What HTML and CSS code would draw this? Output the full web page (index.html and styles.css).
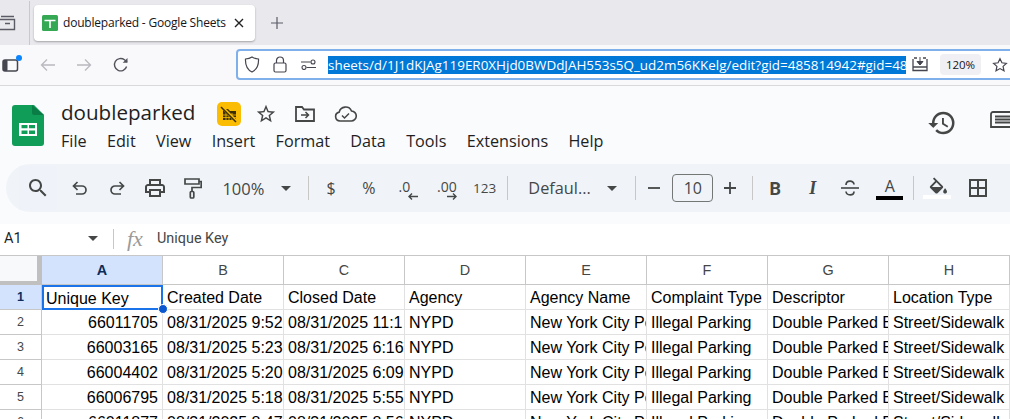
FILE: index.html
```html
<!DOCTYPE html>
<html lang="en">
<head>
<meta charset="UTF-8">
<title>doubleparked - Google Sheets</title>
<link rel="stylesheet" href="styles.css">
</head>
<body>

<!-- browser tabs -->
<div class="tabbar">
  <svg class="tabs-icon" width="16" height="16" viewBox="0 0 16 16"><path d="M1 1.5h13M-1 4.5h15.5v10H-1zM5 8.5h5" fill="none" stroke="#5b5b66" stroke-width="1.4"/></svg>
  <div class="tab-sep"></div>
  <div class="tab">
    <svg class="favicon" width="16" height="16" viewBox="0 0 16 16"><rect width="16" height="16" rx="1.5" fill="#34a853"/><path d="M2.5 5.5h11M8 5.5V13" stroke="#fff" stroke-width="1.6"/></svg>
    <span class="tab-title">doubleparked - Google Sheets</span>
    <svg class="tab-close" width="10" height="10" viewBox="0 0 10 10"><path d="M1 1l8 8M9 1l-8 8" stroke="#222" stroke-width="1.4"/></svg>
  </div>
  <svg class="tab-new" width="14" height="14" viewBox="0 0 14 14"><path d="M7 1v12M1 7h12" stroke="#5b5b66" stroke-width="1.2"/></svg>
</div>

<!-- browser toolbar -->
<div class="navbar">
  <div class="sidebar-btn">
    <svg width="17" height="14" viewBox="0 0 17 14"><rect x="1" y="2" width="14.5" height="11" rx="2" fill="none" stroke="#45454f" stroke-width="1.5"/><rect x="1" y="2" width="4.5" height="11" rx="1" fill="#45454f"/></svg>
    <span class="dot"></span>
  </div>
  <svg class="nav-icon" width="16" height="14" viewBox="0 0 16 14"><path d="M15 7H1.5M7 1.5L1.5 7 7 12.5" fill="none" stroke="#b9b9bf" stroke-width="1.3"/></svg>
  <svg class="nav-icon" width="16" height="14" viewBox="0 0 16 14"><path d="M1 7h13.5M9 1.5L14.5 7 9 12.5" fill="none" stroke="#b9b9bf" stroke-width="1.3"/></svg>
  <svg class="nav-icon" width="16" height="16" viewBox="0 0 16 16"><path d="M13.6 9.5A6.2 6.2 0 1 1 11.5 2.8L14 5" fill="none" stroke="#53535c" stroke-width="1.4"/><path d="M14.5 1v4.8H9.7z" fill="#53535c"/></svg>

  <div class="urlbar">
    <svg class="url-icon" width="16" height="17" viewBox="0 0 16 17"><path d="M8 1c2 1.300 4 1.800 6.500 2 .3 6-1.500 10.500-6.500 13C3 13.500 1.200 9 1.500 3 4 2.800 6 2.300 8 1z" fill="none" stroke="#45454f" stroke-width="1.2"/></svg>
    <svg class="url-icon" width="14" height="17" viewBox="0 0 14 17"><rect x="1" y="7" width="12" height="9" rx="1.500" fill="none" stroke="#45454f" stroke-width="1.2"/><path d="M3.500 7V4.500a3.500 3.500 0 0 1 7 0V7" fill="none" stroke="#45454f" stroke-width="1.2"/></svg>
    <svg class="url-icon" width="15" height="11" viewBox="0 0 15 11"><path d="M0 3h9.500M5.500 8.500H15" stroke="#45454f" stroke-width="1.100"/><circle cx="12" cy="3" r="2" fill="#fff" stroke="#45454f" stroke-width="1.100"/><circle cx="3" cy="8.500" r="2" fill="#fff" stroke="#45454f" stroke-width="1.100"/></svg>
    <div class="url-text">sheets/d/1J1dKJAg119ER0XHjd0BWDdJAH553s5Q_ud2m56KKelg/edit?gid=485814942#gid=485814942</div>
    <svg class="url-save" width="16" height="15" viewBox="0 0 16 15"><path d="M2 1h3M11 1h3M1 2v11.500h14V2M1 10h14" fill="none" stroke="#45454f" stroke-width="1.300"/><path d="M8 0v7M5 4.500L8 8l3-3.500z" fill="#45454f" stroke="#45454f"/></svg>
    <span class="zoom-badge">120%</span>
    <svg class="url-star" width="16" height="16" viewBox="0 0 24 24"><path d="M12 2.500l2.900 6.200 6.700.8-5 4.600 1.400 6.700-6-3.400-6 3.400 1.400-6.700-5-4.600 6.700-.8z" fill="none" stroke="#45454f" stroke-width="1.800"/></svg>
  </div>
</div>

<!-- sheets header -->
<div class="app">
  <div class="docbar">
    <svg class="logo" width="32" height="41" viewBox="0 0 32 41"><path d="M3 0h19l10 10v28a3 3 0 0 1-3 3H3a3 3 0 0 1-3-3V3a3 3 0 0 1 3-3z" fill="#0f9d58"/><path d="M20 0l12 10H22a2 2 0 0 1-2-2z" fill="#0a7d46"/><path d="M7 18h18v13H7zM9.500 20v3.300h6V20zm7.500 0v3.300h6V20zM9.500 25.500V29h6v-3.500zm7.500 0V29h6v-3.500z" fill="#fff" fill-rule="evenodd"/></svg>
    <div class="doc-main">
      <div class="doc-title-row">
        <span class="doc-title">doubleparked</span>
        <span class="doc-badge">
          <svg width="20" height="20" viewBox="0 0 20 20"><path d="M4 5h5l2 2h6v9H4z" fill="#3c3000"/><path d="M7 9v7M10 9v7M13 9v7M4 11h13M4 13.500h13" stroke="#fbbc04" stroke-width=".8"/><path d="M2 2l16 16" stroke="#fbbc04" stroke-width="3"/><path d="M2 3l15 15" stroke="#3c3000" stroke-width="1.500"/></svg>
        </span>
        <svg class="doc-icon star" width="22" height="22" viewBox="0 0 24 24"><path fill="#444746" d="M22 9.240l-7.190-.62L12 2 9.190 8.630 2 9.240l5.460 4.730L5.820 21 12 17.270 18.180 21l-1.630-7.030L22 9.240zM12 15.400l-3.760 2.270 1-4.280-3.320-2.880 4.380-.38L12 6.100l1.710 4.040 4.380.38-3.320 2.880 1 4.280L12 15.400z"/></svg>
        <svg class="doc-icon" width="20" height="16" viewBox="0 0 20 16"><path d="M1 15V1h6l2 2.500h10V15z" fill="none" stroke="#444746" stroke-width="1.800"/><path d="M6 9h7M10.500 6l3 3-3 3" fill="none" stroke="#444746" stroke-width="1.500"/></svg>
        <svg class="doc-icon cloud" width="23" height="16" viewBox="0 0 23 16"><path d="M6 15a4.500 4.500 0 0 1-.8-8.900A6.500 6.500 0 0 1 17.500 5a5 5 0 0 1-.5 10z" fill="none" stroke="#444746" stroke-width="1.600"/><path d="M8 9.500l2.500 2.500L15 7.500" fill="none" stroke="#444746" stroke-width="1.500"/></svg>
      </div>
      <div class="menu">
        <span>File</span><span>Edit</span><span>View</span><span>Insert</span><span>Format</span><span>Data</span><span>Tools</span><span>Extensions</span><span>Help</span>
      </div>
    </div>
    <svg class="history" width="30" height="30" viewBox="0 0 24 24"><path fill="#444746" d="M13 3a9 9 0 0 0-9 9H1l3.890 3.890.07.140L9 12H6c0-3.870 3.130-7 7-7s7 3.130 7 7-3.130 7-7 7c-1.930 0-3.680-.790-4.940-2.060l-1.420 1.420A8.954 8.954 0 0 0 13 21a9 9 0 0 0 0-18zm-1 5v5l4.280 2.540.720-1.210-3.500-2.080V8H12z"/></svg>
    <svg class="comments" width="24" height="20" viewBox="0 0 24 20"><path d="M3 1h21v15H1V3a2 2 0 0 1 2-2zM5 5.500h19M5 8.500h19M5 11.500h19" fill="none" stroke="#444746" stroke-width="1.800"/></svg>
  </div>

  <div class="toolbar">
    <div class="tb tb-search"><svg width="24" height="24" viewBox="0 0 24 24"><path fill="#444746" d="M15.500 14h-.790l-.280-.270C15.410 12.590 16 11.110 16 9.500 16 5.910 13.090 3 9.500 3S3 5.910 3 9.500 5.910 16 9.500 16c1.610 0 3.090-.590 4.230-1.570l.270.280v.790l5 4.990L20.490 19l-4.990-5zm-6 0C7.010 14 5 11.990 5 9.500S7.010 5 9.500 5 14 7.010 14 9.500 11.990 14 9.500 14z"/></svg></div>
    <div class="tb"><svg width="16" height="14" viewBox="0 0 16 14"><path d="M5.500 1L1.500 5l4 4M1.500 5H10a4 4 0 0 1 0 8H4" fill="none" stroke="#444746" stroke-width="1.700"/></svg></div>
    <div class="tb"><svg width="16" height="14" viewBox="0 0 16 14"><path d="M10.500 1l4 4-4 4M14.500 5H6a4 4 0 0 0 0 8h6" fill="none" stroke="#444746" stroke-width="1.700"/></svg></div>
    <div class="tb"><svg width="24" height="24" viewBox="0 0 24 24"><path fill="#444746" d="M19 8h-1V3H6v5H5c-1.660 0-3 1.340-3 3v6h4v4h12v-4h4v-6c0-1.660-1.340-3-3-3zM8 5h8v3H8V5zm8 12v2H8v-4h8v2zm2-2v-2H6v2H4v-4c0-.550.450-1 1-1h14c.550 0 1 .450 1 1v4h-2z"/></svg></div>
    <div class="tb"><svg width="18" height="21" viewBox="0 0 18 21"><path d="M1 1h14v5H1zM15 3.500h2.200v6H8v4" fill="none" stroke="#444746" stroke-width="1.700"/><rect x="6.300" y="13.500" width="3.500" height="6.500" rx="1" fill="none" stroke="#444746" stroke-width="1.700"/></svg></div>
    <div class="tb-zoom"><span>100%</span><i class="caret"></i></div>
    <div class="tb-sep sep-zoom"></div>
    <div class="tb tb-text">$</div>
    <div class="tb tb-text">%</div>
    <div class="tb tb-dec"><span>.0</span><svg width="11" height="7" viewBox="0 0 11 7"><path d="M11 3.500H2M5 .5l-3 3 3 3" fill="none" stroke="#444746" stroke-width="1.400"/></svg></div>
    <div class="tb tb-dec dec-more"><span>.00</span><svg width="11" height="7" viewBox="0 0 11 7"><path d="M0 3.500h9M6 .5l3 3-3 3" fill="none" stroke="#444746" stroke-width="1.400"/></svg></div>
    <div class="tb tb-text tb-small">123</div>
    <div class="tb-sep"></div>
    <div class="tb-font"><span>Defaul...</span><i class="caret"></i></div>
    <div class="tb-sep"></div>
    <div class="tb tb-minus"><svg width="12" height="2" viewBox="0 0 12 2"><path d="M0 1h12" stroke="#444746" stroke-width="1.800"/></svg></div>
    <div class="tb-size">10</div>
    <div class="tb tb-plus"><svg width="12" height="12" viewBox="0 0 12 12"><path d="M0 6h12M6 0v12" stroke="#444746" stroke-width="1.800"/></svg></div>
    <div class="tb-sep sep-format"></div>
    <div class="tb tb-b">B</div>
    <div class="tb tb-i">I</div>
    <div class="tb"><svg width="20" height="16" viewBox="0 0 20 16"><path d="M1 8h18" stroke="#444746" stroke-width="1.600"/><path d="M6 5c0-5 8-5 8 -.5M6 11.500c.5 4.500 8 4.500 8 0" fill="none" stroke="#444746" stroke-width="1.700"/></svg></div>
    <div class="tb tb-color"><span>A</span><i class="color-bar"></i></div>
    <div class="tb-sep sep-fill"></div>
    <div class="tb tb-fill"><svg width="20" height="17" viewBox="0 0 21 17"><path fill="#444746" d="M16.560 8.940L7.620 0 6.210 1.410l2.380 2.380-5.150 5.150c-.590.590-.590 1.540 0 2.120l5.500 5.500c.290.290.680.440 1.060.440s.770-.150 1.060-.440l5.500-5.500c.590-.580.590-1.530 0-2.120zM5.210 10L10 5.210 14.790 10H5.210zM19 11.500s-2 2.170-2 3.500c0 1.100.900 2 2 2s2-.900 2-2c0-1.330-2-3.500-2-3.500z"/><path fill="#444746" d="M4 10h12l-6 6z"/></svg><i class="fill-bar"></i></div>
    <div class="tb tb-borders"><svg width="24" height="24" viewBox="0 0 24 24"><path fill="#444746" d="M3 3v18h18V3H3zm8 16H5v-6h6v6zm0-8H5V5h6v6zm8 8h-6v-6h6v6zm0-8h-6V5h6v6z"/></svg></div>
  </div>
</div>

<!-- formula bar -->
<div class="formula">
  <span class="name-box">A1</span>
  <i class="caret"></i>
  <div class="tb-sep formula-sep"></div>
  <span class="fx">fx</span>
  <span class="formula-text">Unique Key</span>
</div>

<!-- grid -->
<div class="grid">
  <div class="corner"></div>
  <div class="ch active">A</div><div class="ch">B</div><div class="ch">C</div><div class="ch">D</div><div class="ch">E</div><div class="ch">F</div><div class="ch">G</div><div class="ch">H</div>

  <div class="rh active">1</div>
  <div class="c selected">Unique Key<span class="handle"></span></div><div class="c">Created Date</div><div class="c">Closed Date</div><div class="c">Agency</div><div class="c">Agency Name</div><div class="c">Complaint Type</div><div class="c">Descriptor</div><div class="c">Location Type</div>

  <div class="rh">2</div>
  <div class="c num">66011705</div><div class="c">08/31/2025 9:52</div><div class="c">08/31/2025 11:1</div><div class="c">NYPD</div><div class="c">New York City Police Department</div><div class="c">Illegal Parking</div><div class="c">Double Parked Blocking Traffic</div><div class="c">Street/Sidewalk</div>

  <div class="rh">3</div>
  <div class="c num">66003165</div><div class="c">08/31/2025 5:23</div><div class="c">08/31/2025 6:16</div><div class="c">NYPD</div><div class="c">New York City Police Department</div><div class="c">Illegal Parking</div><div class="c">Double Parked Blocking Traffic</div><div class="c">Street/Sidewalk</div>

  <div class="rh">4</div>
  <div class="c num">66004402</div><div class="c">08/31/2025 5:20</div><div class="c">08/31/2025 6:09</div><div class="c">NYPD</div><div class="c">New York City Police Department</div><div class="c">Illegal Parking</div><div class="c">Double Parked Blocking Traffic</div><div class="c">Street/Sidewalk</div>

  <div class="rh">5</div>
  <div class="c num">66006795</div><div class="c">08/31/2025 5:18</div><div class="c">08/31/2025 5:55</div><div class="c">NYPD</div><div class="c">New York City Police Department</div><div class="c">Illegal Parking</div><div class="c">Double Parked Blocking Traffic</div><div class="c">Street/Sidewalk</div>

  <div class="rh">6</div>
  <div class="c num">66011877</div><div class="c">08/31/2025 8:47</div><div class="c">08/31/2025 8:56</div><div class="c">NYPD</div><div class="c">New York City Police Department</div><div class="c">Illegal Parking</div><div class="c">Double Parked Blocking Traffic</div><div class="c">Street/Sidewalk</div>
</div>

</body>
</html>
```

FILE: styles.css
```css
html, body {
  margin: 0;
  height: 419px;
  overflow: hidden;
  background: #fff;
}

body {
  width: 1010px;
  font-family: "Liberation Sans", Arial, sans-serif;
}

svg {
  display: block;
  flex: none;
}

/* browser tabs */
.tabbar {
  height: 45px;
  display: flex;
  align-items: center;
  background: #e9e9ed;
}

.tab-sep {
  width: 1px;
  height: 44px;
  margin-left: 13px;
  background: #c9c9cc;
}

.tab {
  width: 221px;
  height: 36px;
  margin-left: 4px;
  box-sizing: border-box;
  padding-left: 8px;
  display: flex;
  align-items: center;
  background: #fff;
  border-radius: 4px;
  box-shadow: 0 1px 2px rgba(0, 0, 0, 0.3);
}

.tab-title {
  width: 165px;
  margin-left: 5px;
  font: 12px "Open Sans", sans-serif;
  letter-spacing: -0.2px;
  color: #15141a;
  white-space: nowrap;
}

.tab-close {
  margin-left: 6px;
}

.tab-new {
  margin-left: 15px;
}

/* browser toolbar */
.navbar {
  height: 40px;
  display: flex;
  align-items: center;
  background: #f9f9fb;
  border-bottom: 1px solid #d9d9dc;
}

.sidebar-btn {
  position: relative;
  margin-left: 2px;
}

.dot {
  position: absolute;
  top: -3px;
  right: -3px;
  width: 6px;
  height: 6px;
  border-radius: 50%;
  background: #0a84ff;
}

.nav-icon {
  margin-left: 21px;
}

.navbar .nav-icon:nth-child(3) {
  margin-left: 20px;
}

.urlbar {
  width: 800px;
  height: 31px;
  margin-left: 107px;
  margin-top: -1px;
  padding-left: 6px;
  box-sizing: border-box;
  display: flex;
  align-items: center;
  flex: none;
  background: #fff;
  border: 2px solid #80b0ec;
  border-radius: 4px;
}

.url-icon {
  margin-right: 14px;
}

.url-icon:nth-child(2) {
  margin-left: -1px;
}

.url-icon:nth-child(3) {
  margin-right: 12px;
}

.url-text {
  width: 578px;
  height: 18px;
  overflow: hidden;
  flex: none;
  font: 13.45px/18px "Open Sans", sans-serif;
  white-space: nowrap;
  color: #fff;
  background: #0078d7;
}

.url-save {
  margin-left: 6px;
}

.zoom-badge {
  width: 41px;
  height: 21px;
  margin-left: 12px;
  flex: none;
  font: 11.5px/21px "Open Sans", sans-serif;
  text-align: center;
  color: #15141a;
  background: #f0f0f4;
  border-radius: 4px;
}

.url-star {
  margin-left: 11px;
}

/* sheets header */
.app {
  height: 138px;
  box-sizing: border-box;
  background: #f9fbfd;
}

.docbar {
  height: 78px;
  display: flex;
  align-items: flex-start;
}

.logo {
  margin: 19px 0 0 12px;
}

.doc-main {
  margin-left: 17px;
  width: 820px;
  flex: none;
}

.doc-title-row {
  height: 27px;
  margin-top: 14px;
  display: flex;
  align-items: center;
}

.doc-title {
  width: 156px;
  font: 20.6px/27px "Open Sans", sans-serif;
  color: #1f1f1f;
  margin-top: -2px;
}

.doc-badge {
  width: 24px;
  height: 24px;
  display: flex;
  align-items: center;
  justify-content: center;
  background: #fbbc04;
  border-radius: 5px;
}

.doc-icon {
  margin-left: 18px;
}

.doc-icon.star {
  margin-left: 14px;
}

.doc-icon.cloud {
  margin-left: 19px;
}

.menu {
  display: flex;
  gap: 20.3px;
  margin-top: 2px;
  font: 16.2px/24px "Open Sans", sans-serif;
  color: #1f1f1f;
}

.history {
  margin: 22px 0 0 46px;
}

.comments {
  margin: 25px 0 0 33px;
}

/* toolbar */
.toolbar {
  width: 1030px;
  height: 48px;
  margin-left: 6px;
  padding-left: 13px;
  box-sizing: border-box;
  display: flex;
  align-items: center;
  background: #f0f4f9;
  border-radius: 24px 0 0 24px;
  color: #444746;
  font-family: "Open Sans", sans-serif;
}

.tb {
  width: 37.6px;
  height: 32px;
  flex: none;
  display: flex;
  align-items: center;
  justify-content: center;
}

.tb-search {
  width: 38px;
  height: 44px;
  margin-right: 4px;
  background: #eff3f9;
}

.tb-zoom {
  width: 89px;
  box-sizing: border-box;
  padding-left: 11px;
  flex: none;
  display: flex;
  align-items: center;
  gap: 17px;
  font-size: 16.5px;
}

.caret {
  width: 0;
  height: 0;
  flex: none;
  border-left: 5px solid transparent;
  border-right: 5px solid transparent;
  border-top: 5px solid #444746;
}

.tb-sep {
  width: 1px;
  height: 24px;
  flex: none;
  margin: 0 3px 0 4px;
  background: #c7c7c7;
}

.sep-zoom {
  margin: 0 3px 0 8px;
}

.tb-text {
  font-size: 16px;
}

.tb-small {
  font-size: 13.5px;
}

.tb-dec {
  flex-direction: column;
  align-items: center;
  font-size: 14px;
  line-height: 13px;
  padding-top: 3px;
  box-sizing: border-box;
}

.tb-dec svg {
  margin-left: 12px;
}

.tb-dec span {
  margin-left: -4px;
}

.dec-more {
  margin-left: 3px;
}

.dec-more span {
  margin-left: 0;
}

.tb-font {
  width: 120px;
  box-sizing: border-box;
  padding-left: 17px;
  flex: none;
  display: flex;
  align-items: center;
  gap: 15px;
  font-size: 16.3px;
}

.tb-font span {
  width: 64px;
}

.tb-minus {
  width: 33px;
  padding-right: 4px;
  box-sizing: border-box;
}

.tb-size {
  width: 41px;
  height: 28px;
  box-sizing: border-box;
  flex: none;
  font-size: 16px;
  line-height: 26px;
  text-align: center;
  border: 1px solid #747775;
  border-radius: 4px;
}

.tb-plus {
  width: 34px;
}

.sep-format {
  margin: 0 3px 0 5px;
}

.tb-b {
  font: bold 18px "Roboto", sans-serif;
}

.tb-i {
  font: italic bold 18px "Liberation Serif", serif;
}

.tb-color {
  flex-direction: column;
  margin-left: 2px;
  font-size: 16px;
  line-height: 18px;
}

.color-bar {
  display: block;
  width: 27px;
  height: 4px;
  margin-top: 1px;
  background: #000;
}

.sep-fill {
  margin: 0 5px 0 4px;
}

.tb-fill {
  width: 36px;
  flex-direction: column;
  gap: 1px;
}

.fill-bar {
  display: block;
  width: 28px;
  height: 4px;
  background: #fff;
}

.tb-borders {
  margin-left: 4px;
}

/* formula bar */
.formula {
  height: 29px;
  padding-bottom: 2px;
  display: flex;
  align-items: center;
  background: #fff;
  color: #444746;
  border-bottom: 1px solid #c7c7c7;
}

.name-box {
  width: 84px;
  margin-left: 4px;
  font: 14.5px "Roboto", sans-serif;
  color: #1f1f1f;
}

.formula-sep {
  margin: 0 13px 0 15px;
  height: 20px;
}

.fx {
  width: 30px;
  font: italic 22px "Liberation Serif", serif;
  color: #9a9a9a;
}

.formula-text {
  font: 14.4px "Roboto", sans-serif;
}

/* grid */
.grid {
  display: grid;
  grid-template-columns: 42px repeat(8, 121px);
  grid-template-rows: 29px repeat(6, 25px);
}

.corner {
  background: #f8f9fa;
  border-right: 5px solid #c0c0c0;
  border-bottom: 4px solid #c0c0c0;
  box-sizing: border-box;
}

.ch {
  box-sizing: border-box;
  font-size: 14.4px;
  line-height: 28px;
  text-align: center;
  color: #444746;
  border-right: 1px solid #c7c7c7;
  border-bottom: 1px solid #c7c7c7;
}

.rh {
  box-sizing: border-box;
  font-size: 12.5px;
  line-height: 25px;
  text-align: center;
  color: #444746;
  border-right: 1px solid #c7c7c7;
  border-bottom: 1px solid #c7c7c7;
}

.ch.active, .rh.active {
  background: #d3e3fd;
  font-weight: bold;
  color: #0b2d5b;
}

.c {
  position: relative;
  box-sizing: border-box;
  padding: 0 3px 0 4px;
  font-size: 16px;
  line-height: 26px;
  white-space: nowrap;
  overflow: hidden;
  color: #000;
  border-right: 1px solid #e1e1e1;
  border-bottom: 1px solid #e1e1e1;
}

.num {
  text-align: right;
  padding-right: 4px;
}

.selected {
  z-index: 2;
  overflow: visible;
  padding: 0 2px;
  line-height: 23px;
  border: 2px solid #1a73e8;
}

.handle {
  position: absolute;
  right: -7px;
  bottom: -6px;
  width: 8px;
  height: 8px;
  background: #0b57d0;
  border: 1px solid #fff;
  border-radius: 50%;
}
```
